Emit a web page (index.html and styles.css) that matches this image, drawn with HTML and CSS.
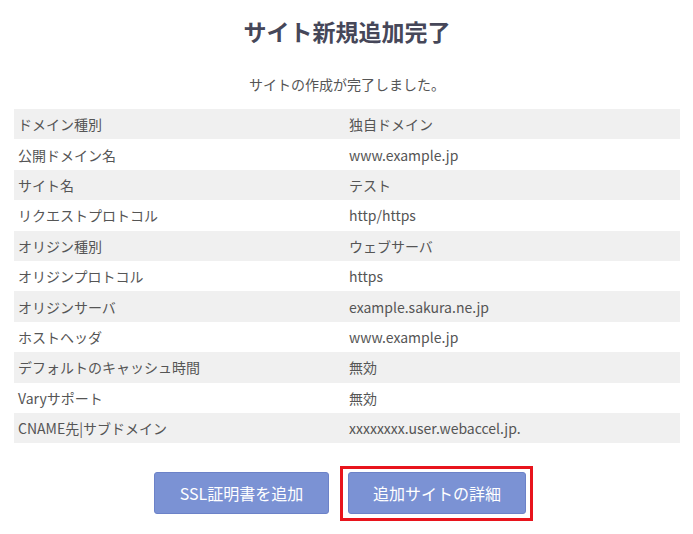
FILE: index.html
```html
<!DOCTYPE html>
<html lang="ja">
<head>
<meta charset="utf-8">
<link rel="stylesheet" href="styles.css">
</head>
<body>
<div class="page">
  <h1 class="title">サイト新規追加完了</h1>
  <p class="lead">サイトの作成が完了しました。</p>
  <table class="info">
    <tr><td>ドメイン種別</td><td>独自ドメイン</td></tr>
    <tr><td>公開ドメイン名</td><td>www.example.jp</td></tr>
    <tr><td>サイト名</td><td>テスト</td></tr>
    <tr><td>リクエストプロトコル</td><td>http/https</td></tr>
    <tr><td>オリジン種別</td><td>ウェブサーバ</td></tr>
    <tr><td>オリジンプロトコル</td><td>https</td></tr>
    <tr><td>オリジンサーバ</td><td>example.sakura.ne.jp</td></tr>
    <tr><td>ホストヘッダ</td><td>www.example.jp</td></tr>
    <tr><td>デフォルトのキャッシュ時間</td><td>無効</td></tr>
    <tr><td>Varyサポート</td><td>無効</td></tr>
    <tr><td>CNAME先|サブドメイン</td><td>xxxxxxxx.user.webaccel.jp.</td></tr>
  </table>
  <div class="actions">
    <button class="btn btn-ssl">SSL証明書を追加</button>
    <div class="highlight">
      <button class="btn btn-detail">追加サイトの詳細</button>
    </div>
  </div>
</div>
</body>
</html>
```

FILE: styles.css
```css
* { box-sizing: border-box; }
html, body { margin: 0; padding: 0; background: #fff; }
body {
  font-family: "Noto Sans CJK JP", "Noto Sans", sans-serif;
  color: #555;
}
.page {
  padding: 0 13px 20px 14px;
  min-height: 534px;
}
.title {
  margin: 0;
  padding-top: 14px;
  height: 58px;
  text-align: center;
  font-size: 23px;
  line-height: 34px;
  font-weight: 700;
  color: #464759;
}
.lead {
  margin: 0;
  height: 51px;
  padding-top: 16px;
  text-align: center;
  font-size: 14px;
  line-height: 20px;
  color: #555;
}
.info {
  width: 100%;
  border-collapse: collapse;
  font-size: 14px;
}
.info tr { height: 30.4px; }
.info tr:nth-child(odd) { background: #f0f0f0; }
.info td {
  padding: 0 4px;
  line-height: 20px;
  width: 50%;
  vertical-align: middle;
}
.info td:last-child { padding-left: 2px; }
.actions {
  display: flex;
  align-items: flex-start;
  gap: 19px;
  margin-top: 29px;
  padding-left: 140px;
}
.btn {
  display: block;
  height: 42px;
  padding: 0;
  border: 1px solid #6c82c8;
  border-radius: 3px;
  background: #7b92d4;
  color: #fff;
  font-family: "Noto Sans CJK JP", "Noto Sans", sans-serif;
  font-size: 16px;
  line-height: 20px;
  text-align: center;
}
.btn-ssl { width: 175px; }
.btn-detail { width: 178px; }
.highlight {
  margin: -6px -7px 0 -8px;
  padding: 3px 4px 4px 5px;
  border: 3px solid #e8141c;
}
```
